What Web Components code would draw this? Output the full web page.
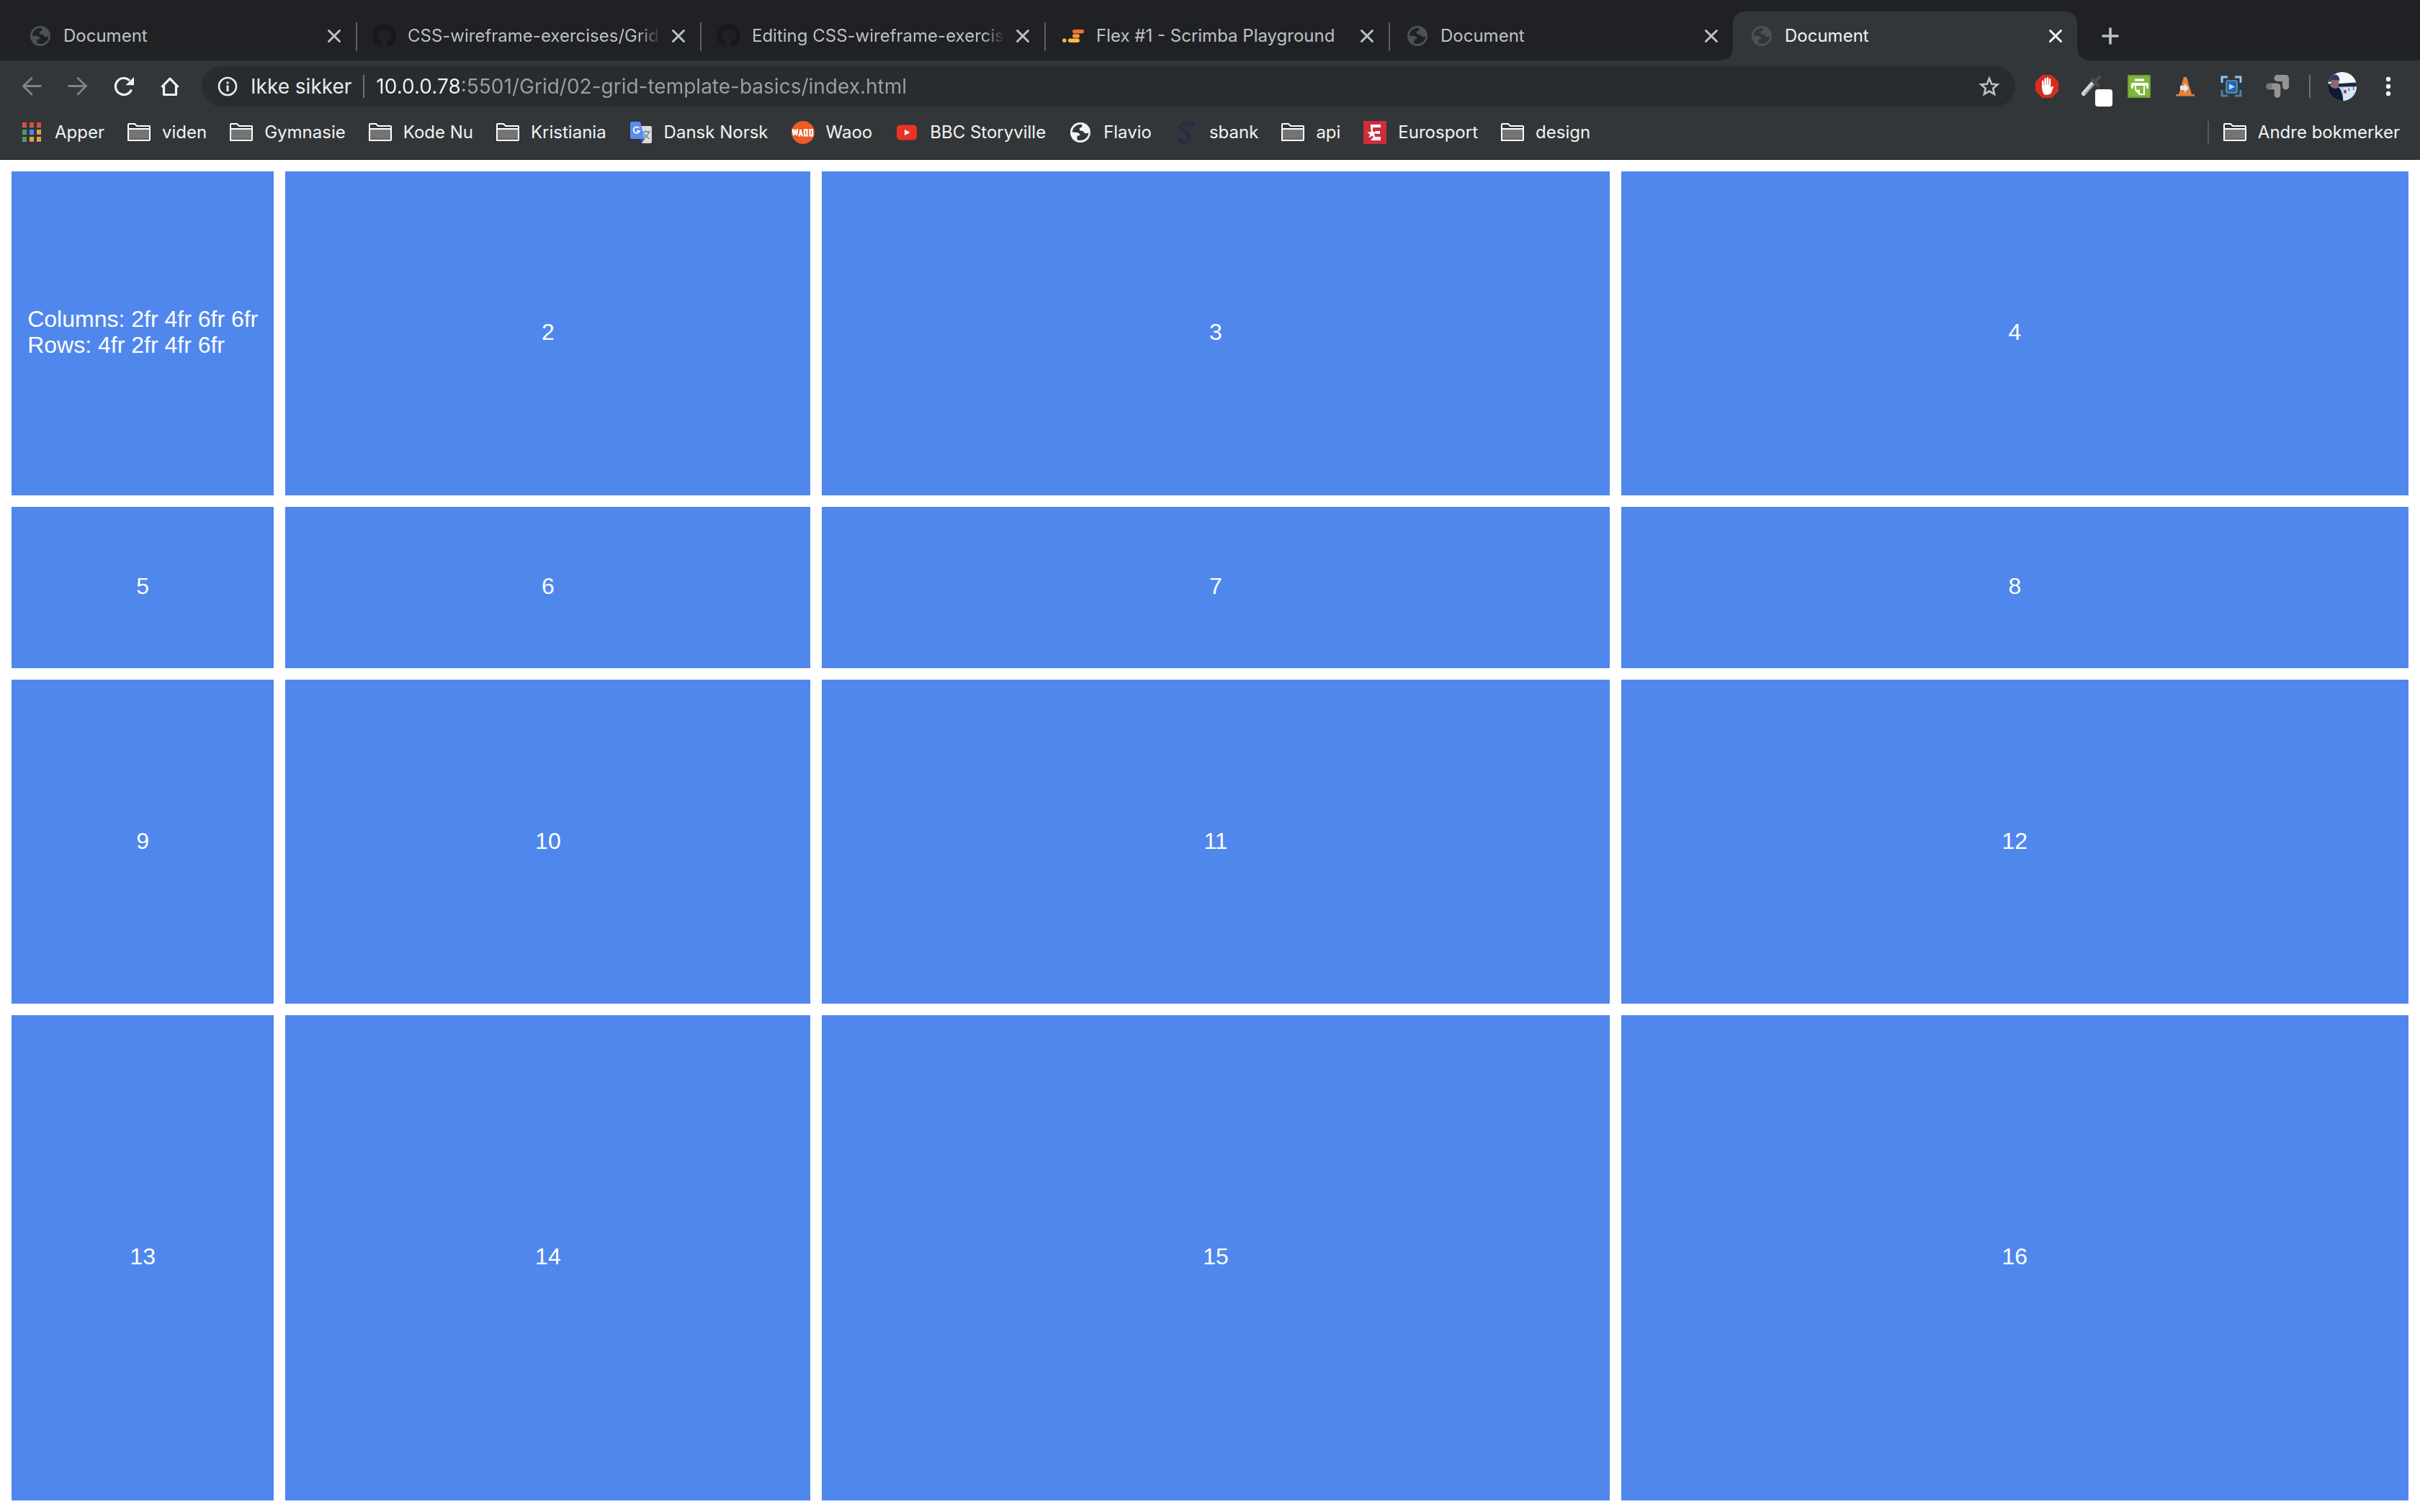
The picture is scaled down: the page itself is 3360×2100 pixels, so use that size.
<!DOCTYPE html>
<html lang="no">
<head>
<meta charset="utf-8">
<title>Document</title>
<style>
html, body { margin: 0; }
body { background: #fff; font-family: Inter, "Noto Sans", sans-serif; }
</style>
</head>
<body>
<browser-window>
  <tab-strip slot="tabs">
    <browser-tab icon="globe-dim">Document</browser-tab>
    <browser-tab icon="github" long>CSS-wireframe-exercises/Grid</browser-tab>
    <browser-tab icon="github" long>Editing CSS-wireframe-exercises</browser-tab>
    <browser-tab icon="scrimba">Flex #1 - Scrimba Playground</browser-tab>
    <browser-tab icon="globe-dim" last>Document</browser-tab>
    <browser-tab icon="globe-dim" active>Document</browser-tab>
  </tab-strip>
  <tool-bar slot="toolbar"></tool-bar>
  <bookmarks-bar slot="bookmarks">
    <book-mark icon="apps">Apper</book-mark>
    <book-mark icon="folder">viden</book-mark>
    <book-mark icon="folder">Gymnasie</book-mark>
    <book-mark icon="folder">Kode Nu</book-mark>
    <book-mark icon="folder">Kristiania</book-mark>
    <book-mark icon="translate">Dansk Norsk</book-mark>
    <book-mark icon="waoo">Waoo</book-mark>
    <book-mark icon="youtube">BBC Storyville</book-mark>
    <book-mark icon="globe">Flavio</book-mark>
    <book-mark icon="sbank">sbank</book-mark>
    <book-mark icon="folder">api</book-mark>
    <book-mark icon="eurosport">Eurosport</book-mark>
    <book-mark icon="folder">design</book-mark>
    <book-mark icon="folder" slot="other">Andre bokmerker</book-mark>
  </bookmarks-bar>
  <grid-board>
    <grid-cell>Columns: 2fr 4fr 6fr 6fr<br>Rows: 4fr 2fr 4fr 6fr</grid-cell>
    <grid-cell>2</grid-cell><grid-cell>3</grid-cell><grid-cell>4</grid-cell>
    <grid-cell>5</grid-cell><grid-cell>6</grid-cell><grid-cell>7</grid-cell><grid-cell>8</grid-cell>
    <grid-cell>9</grid-cell><grid-cell>10</grid-cell><grid-cell>11</grid-cell><grid-cell>12</grid-cell>
    <grid-cell>13</grid-cell><grid-cell>14</grid-cell><grid-cell>15</grid-cell><grid-cell>16</grid-cell>
  </grid-board>
</browser-window>

<script>
const globe = (disc, land) => `<circle cx="16" cy="16" r="14" fill="${disc}"/><path fill="${land}" d="M18 4.8C10.500 4.300 5 9.500 4.800 15.500L11 16c3 .3 4.600 1.800 4.500 4l-3 .5c-.8.3-1 1-1 2v3.800C19.500 29 27.500 23.500 27.300 16.200c-1.600 1.500-4.600 1.500-6 0-.8-.9-1-2-2.300-2.200-2.500 0-4.500-.5-4.300-2.700.2-2 1.700-2 3-2.500 1.200-.6.300-2.400.3-4z"/>`;

/* Every icon is drawn in a 32 x 32 box. */
const ICONS = {
  'globe': globe('#f1f3f4', '#323639'),
  'globe-dim': globe('#4d5155', 'var(--tab-bg, #202124)'),
  'github': '<path fill="#191717" d="M16 0C7.160 0 0 7.160 0 16c0 7.060 4.580 13.060 10.940 15.180.8.140 1.100-.34 1.100-.76 0-.38-.02-1.640-.02-2.980-4.020.74-5.060-.98-5.380-1.880-.18-.46-.96-1.880-1.640-2.260-.56-.3-1.360-1.040-.02-1.060 1.260-.02 2.160 1.160 2.460 1.640 1.440 2.420 3.740 1.740 4.660 1.320.14-1.040.56-1.740 1.020-2.140-3.560-.4-7.280-1.780-7.280-7.900 0-1.740.62-3.180 1.640-4.300-.16-.4-.72-2.040.16-4.240 0 0 1.340-.42 4.400 1.640 1.280-.36 2.640-.54 4-.54s2.720.18 4 .54c3.060-2.080 4.400-1.640 4.400-1.640.88 2.200.32 3.840.16 4.240 1.020 1.120 1.640 2.540 1.640 4.300 0 6.140-3.740 7.500-7.300 7.900.58.5 1.080 1.460 1.080 2.960 0 2.140-.02 3.860-.02 4.400 0 .42.300.92 1.100.76C27.420 29.060 32 23.040 32 16 32 7.160 24.840 0 16 0z"/>',
  'scrimba': '<rect x="15" y="7" width="16" height="5.400" rx="2.700" fill="#f3702a"/><rect x="15" y="13.300" width="10" height="5.400" rx="2.700" fill="#f59331"/><rect x="9" y="19.600" width="16" height="5.400" rx="2.700" fill="#f9bb43"/><rect x="1" y="19.600" width="5.600" height="5.400" rx="2.700" fill="#f9bb43"/>',
  'close': '<path d="M8.500 8.500l15 15m0-15l-15 15" fill="none" stroke="currentColor" stroke-width="3" stroke-linecap="round"/>',
  'plus': '<path d="M16 4.500v23M4.500 16h23" fill="none" stroke="currentColor" stroke-width="4.200" stroke-linecap="round"/>',
  'back': '<path d="M28.500 15.500H4.500M16 4.500L4.500 15.500 16 27" fill="none" stroke="#808386" stroke-width="2.800" stroke-linecap="round"/>',
  'forward': '<path d="M3.500 15.500h24M16 4.500l11.500 11L16 27" fill="none" stroke="#808386" stroke-width="2.800" stroke-linecap="round"/>',
  'reload': '<path d="M26.500 20.500A11.500 11.500 0 1 1 24 7.800" fill="none" stroke="#f1f3f4" stroke-width="3.200"/><path fill="#f1f3f4" d="M30 3v11.200H18.500z"/>',
  'home': '<path d="M4.500 17L16 5.200 27.500 17M7.500 15v12.500h17V15" fill="none" stroke="#f1f3f4" stroke-width="3.200" stroke-linejoin="round"/>',
  'info': '<circle cx="16" cy="16" r="12" fill="none" stroke="#e8eaed" stroke-width="2.600"/><path fill="#e8eaed" d="M14.500 9.500h3v3h-3zM14.500 14.500h3V23h-3z"/>',
  'star': '<path d="M16 5l3.200 7.700 8.300.7-6.300 5.400 1.900 8.100L16 22.600l-7.100 4.300 1.900-8.100-6.300-5.400 8.300-.7z" fill="none" stroke="#bdc1c6" stroke-width="2.600"/>',
  'adblock': '<path fill="#d52d21" d="M9.500 0h13L32 9.500v13L22.500 32h-13L0 22.500v-13z"/><path fill="#fff" d="M12 27c-2-2.500-3-7-3-11V9c0-1.600 2.200-1.600 2.400 0l.4 5.500.6.100V6c0-2 2.600-2 2.600 0v8h.6V4.700c0-1.800 2.600-1.800 2.600 0V14h.6V6.500c0-1.900 2.500-1.900 2.500 0V18l1.800-1.900c1.100-1 2.600-.3 1.900 1L22 25c-1.500 3-8 3.400-10 2z"/>',
  'dropper': '<path d="M3 26L17 10" stroke="#d8d8d8" stroke-width="6" stroke-linecap="round"/><path d="M4.500 27L18 12" stroke="#a2a2a2" stroke-width="2"/><path d="M15 7l8 8M18 10l7-7" stroke="#494b4d" stroke-width="5" stroke-linecap="round"/><rect x="19" y="20" width="24" height="24" rx="4" fill="#fff"/>',
  'printer': '<rect width="32" height="32" rx="2" fill="#82b63b"/><rect x="1" y="1" width="30" height="30" rx="2" fill="none" stroke="#6ea02d" stroke-width="2"/><path fill="#fff" d="M10 5.500h13v3H10zM5 13q0-2 2-2h20q2 0 2 2v6h-3v-4H8v4H5z"/><path fill="none" stroke="#fff" stroke-width="2" d="M11 15v6l6 6h6V15"/><path fill="#fff" d="M11 20.500h6V27z"/>',
  'vlc': '<path fill="#e6803b" d="M14.500 3h3c.6 0 .7.500.9 1.200L25 27h4v2.500H3V27h4l6.600-22.800c.2-.7.300-1.200.9-1.200z"/><path fill="#e6e6e6" d="M9 15h6v-3.500l6 7-6 6V21H9z"/>',
  'capture': '<path d="M3 11V3h8M21 3h8v8" fill="none" stroke="#91c6f2" stroke-width="3"/><path d="M3 21v8h8M21 29h8v-8" fill="none" stroke="#4b7fae" stroke-width="3"/><rect x="9" y="8" width="15" height="17" rx="2" fill="#1c68bd" stroke="#7393b1" stroke-width="1.500"/><path fill="#c7dcef" d="M13 12.500l8 4-8 4z"/>',
  'corners': '<path d="M16 4.500h11.500V16" fill="none" stroke="#949494" stroke-width="9" stroke-linecap="round" stroke-linejoin="round"/><path d="M4.500 16h11.500v11.500" fill="none" stroke="#323639" stroke-width="10.500" stroke-linejoin="round"/><path d="M4.500 16h11.500v11.500" fill="none" stroke="#949494" stroke-width="8.500" stroke-linecap="round" stroke-linejoin="round"/><circle cx="4.500" cy="16" r="4.300" fill="#777"/>',
  'menu': '<g fill="#f1f3f4"><circle cx="16" cy="6" r="3.200"/><circle cx="16" cy="16" r="3.200"/><circle cx="16" cy="26" r="3.200"/></g>',
  'avatar': '<defs><clipPath id="c"><circle cx="16" cy="16" r="16"/></clipPath></defs><g clip-path="url(#c)"><path fill="#f4f6fb" d="M0 0h32v13H0z"/><path fill="#b9d3f0" d="M0 15h32v17H0z"/><path fill="#1d2740" d="M11 13l21-1.500V16l-20 .5z"/><path fill="#d4e5f7" d="M18 17h14v15H17z"/><path fill="#2b3c62" d="M2 8C3 1 13 1 13 9l-1 2H1z"/><path fill="#8a6a6c" d="M3 9h9v7c-1 4-6 4-7 1z"/><path fill="#121a32" d="M0 14l4 2c2 3 5 3 8 1 3 3 5 9 5 15H0z"/><path fill="#b02338" d="M18 20h2.500v3.500H18z"/><path fill="#39466b" d="M23 18h1v3h-1zM28 16h1v4h-1z"/></g>',
  'apps': '<path fill="#e2493c" d="M3 2h6v6H3zM13 2h6v6h-6zM23 2h6v6h-6z"/><path fill="#4f9a5d" d="M3 12h6v6H3zM3 22h6v6H3z"/><path fill="#4186f0" d="M13 12h6v6h-6z"/><path fill="#e6a23a" d="M23 12h6v6h-6zM13 22h6v6h-6zM23 22h6v6h-6z"/><path fill="#8d9092" d="M3 8h6v1H3zM13 8h6v1h-6zM23 8h6v1h-6zM3 18h6v1H3zM13 18h6v1h-6zM23 18h6v1h-6zM3 28h6v1H3zM13 28h6v1h-6zM23 28h6v1h-6z"/>',
  'folder': '<path fill="#737476" d="M1 11h30v16H1z"/><path fill="#616264" d="M1 24h30v3H1z"/><path fill="none" stroke="#fff" stroke-width="2" stroke-linejoin="round" d="M1 27V5q0-1 1-1h8l3 3h17q1 0 1 1v18q0 1-1 1H2q-1 0-1-1zM1 11h30"/>',
  'translate': '<path fill="#dcdcdc" d="M14 7h15q2 0 2 2v20q0 2-2 2H17z"/><path d="M18 15h11M23 13v2M27 15c-1 4-4 7-7 9M20 17c1 3 5 6 8 8" fill="none" stroke="#6f8c9b" stroke-width="1.500"/><path fill="#3b50b4" d="M15 25h6l-4 6z"/><path fill="#5a8cee" d="M3 1h12l6 24H3q-2 0-2-2V3q0-2 2-2z"/><path d="M13.500 10A4.300 4.300 0 1 0 14 14H10" fill="none" stroke="#f2f5fc" stroke-width="2"/>',
  'waoo': '<circle cx="16" cy="16" r="16" fill="#ed5b26"/><path fill="none" stroke="#fff" stroke-width="2.200" d="M1.500 11l1.500 9 2-8 2 8 1.500-9M10.500 21.500l2.200-9.500 2.300 9.500M11.500 18.500h3M18 12.200h3.500v8.300H18zM25.500 12.200H29v8.300h-3.500z"/>',
  'youtube': '<rect x="2" y="5.500" width="28" height="21" rx="5" fill="#ea3323"/><path fill="#fff" d="M13 12l7.500 4-7.500 4z"/>',
  'sbank': '<path d="M20 8c-1-5-12-5-12 1 0 7 13 5 12 14-1 8-13 8-14 1" fill="none" stroke="#292849" stroke-width="3.500"/><path fill="#292849" d="M24 0h3v2h2v3h-2v2h-3V5h-2V2h2z"/>',
  'eurosport': '<path fill="#ce2c3d" d="M0 0h32v32H0z"/><path fill="#fff" d="M10 5h14v4H13v3h-3zM16 14h7v4h-5zM14 22h10v5H10zM12 10.500l2 5h5l-4 3.200 1.600 4.800-4.600-3-4.600 3 1.600-4.800-4-3.200h5z"/>'
};

const define = (name, html, init) => customElements.define(name, class extends HTMLElement {
  constructor() {
    super();
    this.attachShadow({ mode: 'open' }).innerHTML = html;
  }
  connectedCallback() { if (init) init(this, this.shadowRoot); }
});

define('ui-icon', `<style>
  :host { display: block; flex: none; width: 32px; height: 32px; }
  svg { display: block; width: 100%; height: 100%; overflow: visible; }
</style><svg viewBox="0 0 32 32" aria-hidden="true"></svg>`,
  (el, root) => { root.querySelector('svg').innerHTML = ICONS[el.getAttribute('name')] || ''; });

define('browser-window', `<style>
  :host { display: flex; flex-direction: column; min-height: 100vh; }
  ::slotted(grid-board) { flex: 1; }
</style><slot name="tabs"></slot><slot name="toolbar"></slot><slot name="bookmarks"></slot><slot></slot>`);

define('tab-strip', `<style>
  :host { display: flex; background: #202124; padding: 16px 16px 0; }
  button { all: unset; display: flex; align-items: center; color: #bdc1c6; padding: 0 32px; }
  ui-icon { width: 28px; height: 28px; }
</style><slot></slot><button aria-label="Ny fane"><ui-icon name="plus"></ui-icon></button>`);

define('browser-tab', `<style>
  :host { position: relative; display: flex; align-items: center; flex: 0 1 478px; min-width: 0; height: 68px;
    box-sizing: border-box; padding: 0 14px 0 24px; gap: 16px; color: #bdc1c6; border-radius: 16px 16px 0 0; }
  :host::after { content: ""; position: absolute; right: -2px; top: 15px; width: 2px; height: 40px; background: #5b5e62; }
  :host([last])::after { display: none; }
  :host([active]) { --tab-bg: #323639; background: #323639; color: #f1f3f4; }
  :host([active])::before, :host([active])::after { content: ""; position: absolute; top: auto; bottom: 0; width: 16px; height: 16px; }
  :host([active])::before { left: -16px; background: radial-gradient(circle at 0 0, transparent 15px, #323639 16px); }
  :host([active])::after { right: -16px; background: radial-gradient(circle at 100% 0, transparent 15px, #323639 16px); }
  button { all: unset; }
  .title { flex: 1; min-width: 0; margin-right: -8px; padding-right: 8px; box-sizing: border-box; overflow: hidden;
    white-space: nowrap; font-size: 24px; line-height: 32px; }
  :host([long]) .title { -webkit-mask-image: linear-gradient(to left, transparent, #000 32px); mask-image: linear-gradient(to left, transparent, #000 32px); }
</style><ui-icon></ui-icon><button class="title" role="tab"><slot></slot></button><button aria-label="Lukk"><ui-icon name="close"></ui-icon></button>`,
  (el, root) => {
    const icon = document.createElement('ui-icon');
    icon.setAttribute('name', el.getAttribute('icon'));
    root.querySelector('ui-icon').replaceWith(icon);
  });

define('tool-bar', `<style>
  :host { display: flex; align-items: center; gap: 32px; background: #323639; padding: 8px 28px; }
  button { all: unset; display: block; }
  .omnibox { flex: 1; display: flex; align-items: center; height: 56px; box-sizing: border-box; margin: 0 -4px;
    padding: 0 20px; border-radius: 28px; background: #282c2f; color: #e8eaed; font-size: 28px; line-height: 36px; }
  .omnibox label { padding: 0 16px; white-space: nowrap; }
  .rule { flex: none; width: 2px; height: 32px; background: #6f7275; }
  input { all: unset; flex: 1; min-width: 0; margin: 0 16px; font: inherit; height: 40px; --host-width: 118px;
    background: linear-gradient(to right, #f1f3f4 var(--host-width), #9aa0a6 var(--host-width));
    -webkit-background-clip: text; background-clip: text; -webkit-text-fill-color: transparent; }
  .avatar { width: 40px; height: 40px; }
  .end { display: flex; align-items: center; gap: 24px; margin: 0 -4px; }
</style>
<button aria-label="Tilbake"><ui-icon name="back"></ui-icon></button>
<button aria-label="Fremover"><ui-icon name="forward"></ui-icon></button>
<button aria-label="Last inn på nytt"><ui-icon name="reload"></ui-icon></button>
<button aria-label="Startside"><ui-icon name="home"></ui-icon></button>
<div class="omnibox">
  <ui-icon name="info"></ui-icon><label for="url">Ikke sikker</label><span class="rule"></span>
  <input id="url" type="text" spellcheck="false" value="10.0.0.78:5501/Grid/02-grid-template-basics/index.html">
  <button aria-label="Bokmerk denne siden"><ui-icon name="star"></ui-icon></button>
</div>
<button aria-label="Annonseblokkering"><ui-icon name="adblock"></ui-icon></button>
<button aria-label="Fargevelger"><ui-icon name="dropper"></ui-icon></button>
<button aria-label="Skriv ut"><ui-icon name="printer"></ui-icon></button>
<button aria-label="VLC"><ui-icon name="vlc"></ui-icon></button>
<button aria-label="Skjermopptak"><ui-icon name="capture"></ui-icon></button>
<button aria-label="Hjørner"><ui-icon name="corners"></ui-icon></button>
<div class="end"><span class="rule"></span>
<button aria-label="Profil"><ui-icon class="avatar" name="avatar"></ui-icon></button></div>
<button aria-label="Meny"><ui-icon name="menu"></ui-icon></button>`);

define('bookmarks-bar', `<style>
  :host { display: flex; align-items: center; gap: 32px; background: #323639; padding: 10px 28px 19px; border-bottom: 1px solid #202124;
    height: 36px; }
  .space { flex: 1; }
  .rule { width: 2px; height: 32px; margin-right: -12px; background: #55585b; }
</style><slot></slot><span class="space"></span><span class="rule"></span><slot name="other"></slot>`);

define('book-mark', `<style>
  :host { display: block; flex: none; }
  a { display: flex; align-items: center; gap: 16px; color: #f1f3f4; text-decoration: none; white-space: nowrap;
    font-size: 24px; line-height: 32px; }
</style><a href="#"><ui-icon></ui-icon><slot></slot></a>`,
  (el, root) => {
    const icon = document.createElement('ui-icon');
    icon.setAttribute('name', el.getAttribute('icon'));
    root.querySelector('ui-icon').replaceWith(icon);
  });

define('grid-board', `<style>
  :host { display: grid; grid-template-columns: 2fr 4fr 6fr 6fr; grid-template-rows: 4fr 2fr 4fr 6fr; gap: 16px; padding: 16px;
    background: #fff; font-family: "Liberation Sans", Arial, sans-serif; }
</style><slot></slot>`);

define('grid-cell', `<style>
  :host { display: flex; align-items: center; justify-content: center; min-width: 0; background: #5087ec; color: #fff;
    padding-bottom: 3px; font-size: 32px; line-height: 36px; }
</style><div><slot></slot></div>`);
</script>
</body>
</html>
